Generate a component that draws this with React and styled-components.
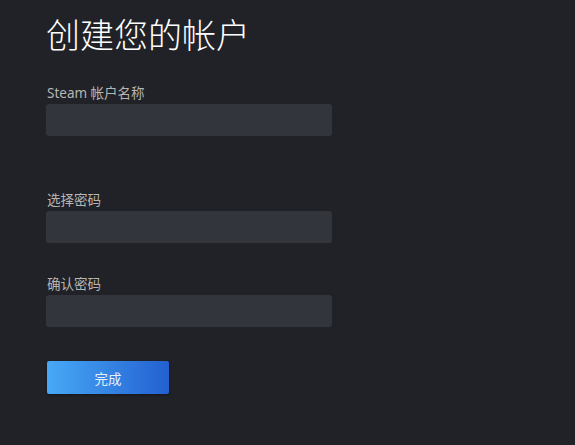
import styled, { createGlobalStyle } from "styled-components";

const GlobalStyle = createGlobalStyle`
  html, body {
    margin: 0;
    padding: 0;
    background: #202227;
  }
  body {
    font-family: "Noto Sans", "Noto Sans CJK SC", sans-serif;
  }
`;

const Page = styled.div`
  min-height: 445px;
  padding: 11px 0 0 46px;
  box-sizing: border-box;
  background: #202227;
`;

const Title = styled.h1`
  margin: 0 0 28px;
  font-family: "Noto Sans CJK SC", sans-serif;
  font-size: 34px;
  font-weight: 300;
  line-height: 46px;
  color: #ffffff;
`;

const Field = styled.div`
  display: flex;
  flex-direction: column;
  gap: 2px;
  margin-bottom: ${(p) => p.$space}px;
`;

const Label = styled.label`
  padding-left: 1px;
  font-family: "Noto Sans", "Noto Sans CJK SC", sans-serif;
  font-size: 13.5px;
  line-height: 17px;
  color: #b8b6b4;
`;

const Input = styled.input`
  width: 286px;
  height: 32px;
  box-sizing: border-box;
  border: none;
  border-radius: 3px;
  background: #32353c;
  color: #fff;
  outline: none;
`;

const Submit = styled.button`
  width: 122px;
  height: 33px;
  margin: 1px 0 0 1px;
  border: none;
  border-radius: 2px;
  background: linear-gradient(90deg, #47a9f6 0%, #2360d1 100%);
  box-shadow: 0 1px 3px rgba(0, 0, 0, 0.4);
  font-family: "Noto Sans CJK SC", sans-serif;
  font-size: 13.5px;
  color: #e6eefa;
  cursor: pointer;
`;

export default function App() {
  return (
    <>
      <GlobalStyle />
      <Page>
        <Title>创建您的帐户</Title>
        <Field $space={56}>
          <Label>Steam 帐户名称</Label>
          <Input type="text" />
        </Field>
        <Field $space={33}>
          <Label>选择密码</Label>
          <Input type="password" />
        </Field>
        <Field $space={33}>
          <Label>确认密码</Label>
          <Input type="password" />
        </Field>
        <Submit>完成</Submit>
      </Page>
    </>
  );
}
